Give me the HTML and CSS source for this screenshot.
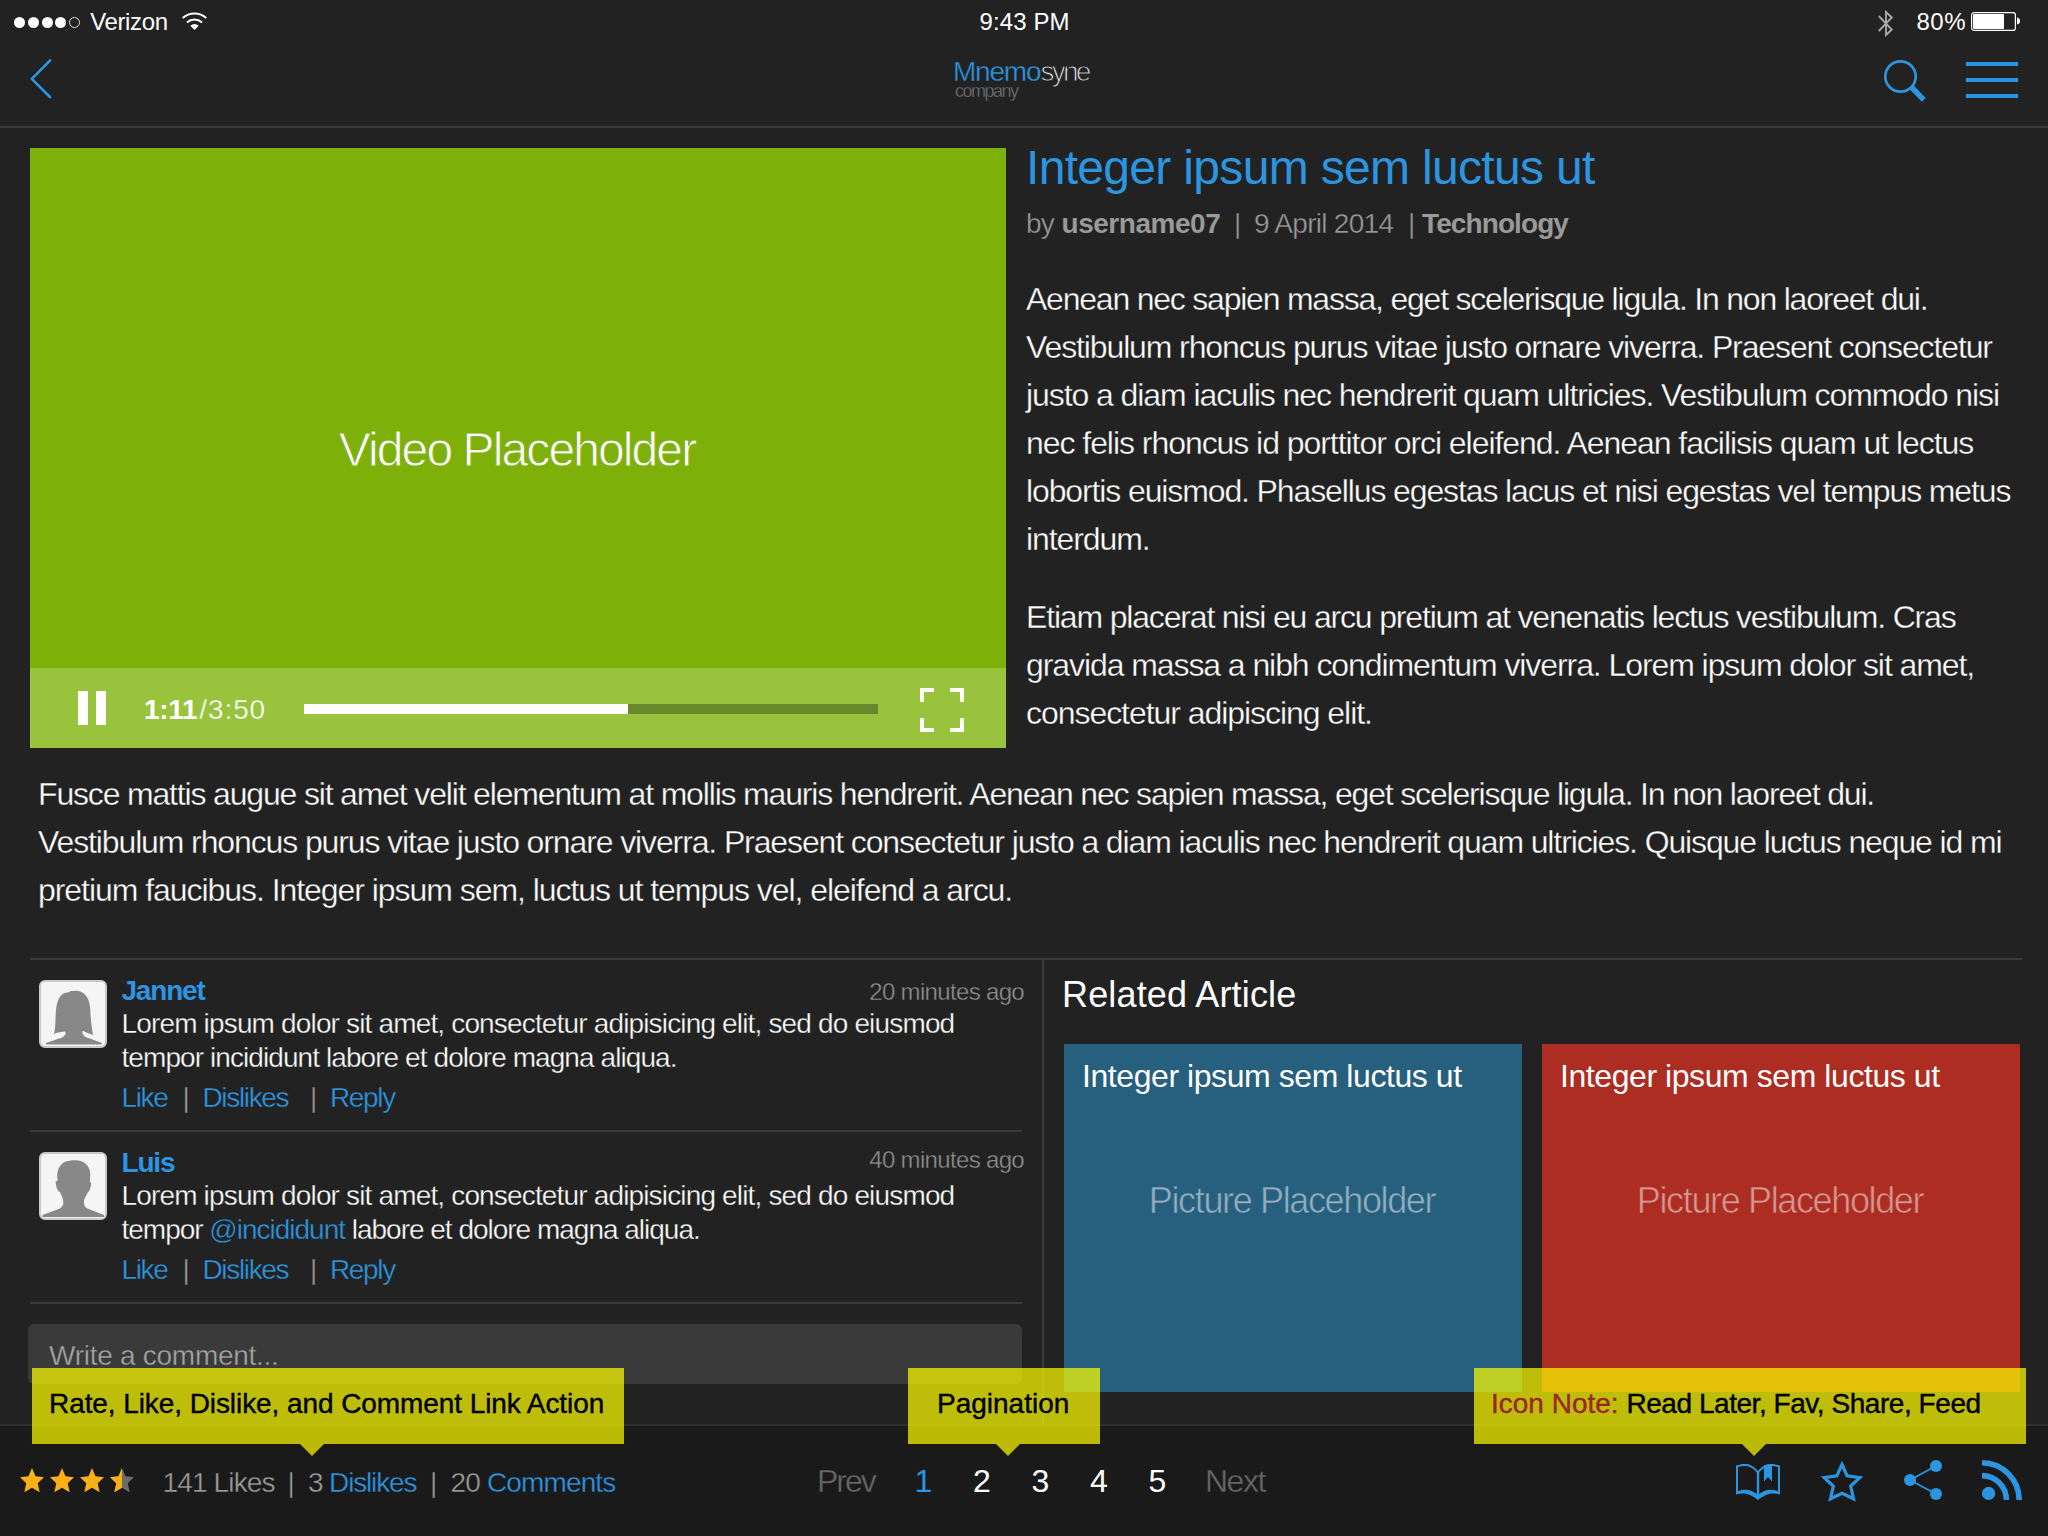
FILE: index.html
```
<!DOCTYPE html>
<html lang="en">
<head>
<meta charset="utf-8">
<title>Mnemosyne</title>
<link rel="stylesheet" href="styles.css">
</head>
<body>
<div class="status">
  <div class="status-left">
    <span class="signal"><i></i><i></i><i></i><i></i><i class="empty"></i></span>
    <span class="carrier">Verizon</span>
    <svg class="wifi" width="25" height="18" viewBox="0 0 25 18"><g fill="none" stroke="#fff" stroke-width="2"><path d="M.7 6A17.5 17.5 0 0 1 24.3 6"/><path d="M4.900 10.400A11.500 11.500 0 0 1 20.100 10.400"/></g><path d="M8.300 13.700Q12.500 10.300 16.700 13.700L12.500 18Z" fill="#fff"/></svg>
  </div>
  <div class="clock">9:43 PM</div>
  <div class="status-right">
    <svg class="bluetooth" width="15" height="27" viewBox="0 0 15 27"><path d="M.8 6L13.800 19.500L8 25V2L13.800 7.500L.8 21" fill="none" stroke="#a8a8a8" stroke-width="1.900"/></svg>
    <span class="charge">80%</span>
    <svg width="49" height="19" viewBox="0 0 49 19"><rect x=".6" y=".6" width="43.800" height="17.800" rx="2.500" fill="none" stroke="#fff" stroke-width="1.200"/><rect x="2" y="2" width="31" height="15" rx="1" fill="#fff"/><path d="M46 5.500Q49 6 49 9T46 12.500Z" fill="#fff"/></svg>
  </div>
</div>

<header class="nav">
  <svg class="back" width="22" height="40" viewBox="0 0 22 40"><path d="M20 1.500L1.800 19.800L20 38" fill="none" stroke="#2c95e0" stroke-width="2.600" stroke-linecap="round" stroke-linejoin="round"/></svg>
  <div class="logo">
    <div class="logo-name"><span class="logo-blue">Mnemo</span><span class="logo-thin">syne</span></div>
    <div class="logo-sub">company</div>
  </div>
  <div class="nav-tools">
    <svg width="42" height="42" viewBox="0 0 42 42" fill="none" stroke="#2c95e0"><circle cx="16.500" cy="16.500" r="15.200" stroke-width="2.700"/><path d="M27.300 27L39.800 39.800" stroke-width="5.500"/></svg>
    <div class="menu"><i></i><i></i><i></i></div>
  </div>
</header>

<main class="page">
  <article>
    <div class="lead">
      <div class="video">
        <div class="video-label">Video Placeholder</div>
        <div class="controls">
          <div class="pause"><i></i><i></i></div>
          <div class="time"><b>1:11</b><span>/3:50</span></div>
          <div class="track"><div class="played"></div></div>
          <svg class="full" width="44" height="44" viewBox="0 0 44 44"><path d="M2 14V2H14M30 2H42V14M42 30V42H30M14 42H2V30" fill="none" stroke="#fff" stroke-width="4"/></svg>
        </div>
      </div>
      <div class="intro">
        <h1>Integer ipsum sem luctus ut</h1>
        <div class="meta"><span>by</span><b class="user">username07</b><span>|</span><span>9 April 2014</span><span>|</span><b>Technology</b></div>
        <p class="copy">
          <span class="line tight">Aenean nec sapien massa, eget scelerisque ligula. In non laoreet dui.</span>
          <span class="line">Vestibulum rhoncus purus vitae justo ornare viverra. Praesent consectetur</span>
          <span class="line open">justo a diam iaculis nec hendrerit quam ultricies. Vestibulum commodo nisi</span>
          <span class="line loose">nec felis rhoncus id porttitor orci eleifend. Aenean facilisis quam ut lectus</span>
          <span class="line">lobortis euismod. Phasellus egestas lacus et nisi egestas vel tempus metus</span>
          <span class="line open">interdum.</span>
        </p>
        <p class="copy">
          <span class="line snug">Etiam placerat nisi eu arcu pretium at venenatis lectus vestibulum. Cras</span>
          <span class="line open">gravida massa a nibh condimentum viverra. Lorem ipsum dolor sit amet,</span>
          <span class="line loose">consectetur adipiscing elit.</span>
        </p>
      </div>
    </div>
    <p class="copy wide">
      <span class="line snug">Fusce mattis augue sit amet velit elementum at mollis mauris hendrerit. Aenean nec sapien massa, eget scelerisque ligula. In non laoreet dui.</span>
      <span class="line">Vestibulum rhoncus purus vitae justo ornare viverra. Praesent consectetur justo a diam iaculis nec hendrerit quam ultricies. Quisque luctus neque id mi</span>
      <span class="line loose">pretium faucibus. Integer ipsum sem, luctus ut tempus vel, eleifend a arcu.</span>
    </p>
  </article>

  <div class="lower">
    <section class="comments">
      <div class="comment">
        <svg class="avatar" width="68" height="68" viewBox="0 0 68 68"><rect x="1" y="1" width="66" height="66" rx="5" fill="#f5f5f5" stroke="#ccc8c8" stroke-width="2"/><path d="M35.500 11C41 10 51 14 51.300 30C51.500 40 53 48 54 55C49 53 46 52 44.300 51C42.500 51 43 57 50.300 58.300L62.700 63V64.500H7V63L20 58.500C25 58 27.500 54 26.300 51.500C23 52 19 52 15 54C17 46 16 40 17 30C18 17 24 12 29 12.500C31 10.800 33 11 35.500 11Z" fill="#888"/></svg>
        <div class="comment-body">
          <div class="comment-head"><b>Jannet</b><span class="when">20 minutes ago</span></div>
          <p class="said"><span class="said-line">Lorem ipsum dolor sit amet, consectetur adipisicing elit, sed do eiusmod</span><span class="said-line second">tempor incididunt labore et dolore magna aliqua.</span></p>
          <div class="actions"><a>Like</a><span>|</span><a>Dislikes</a><span>|</span><a>Reply</a></div>
        </div>
      </div>
      <div class="comment">
        <svg class="avatar" width="68" height="68" viewBox="0 0 68 68"><rect x="1" y="1" width="66" height="66" rx="5" fill="#f5f5f5" stroke="#ccc8c8" stroke-width="2"/><path d="M35.500 8.300C44 7.500 51.500 14 51.300 22C51 25 51.200 28 50.800 30C53 30 52 34 51 37C50 40 49 40 48.300 41C47 45 45 46 45 50C45 55 47 56 50.300 57.300L65 63V65H3.500V63L19 57.300C22 56 24.500 54 24.300 50C24 45 22 43 21.300 40.500C18 39 17 34 16.600 29.500L18.800 28.500C18 25 18 22 18.800 19C21 11 27 8.500 31.500 8.800C33 8 34 8.300 35.500 8.300Z" fill="#888"/></svg>
        <div class="comment-body">
          <div class="comment-head"><b>Luis</b><span class="when raised">40 minutes ago</span></div>
          <p class="said"><span class="said-line">Lorem ipsum dolor sit amet, consectetur adipisicing elit, sed do eiusmod</span><span class="said-line mention">tempor <a>@incididunt</a> labore et dolore magna aliqua.</span></p>
          <div class="actions"><a>Like</a><span>|</span><a>Dislikes</a><span>|</span><a>Reply</a></div>
        </div>
      </div>
      <div class="write">Write a comment...</div>
    </section>
    <section class="related">
      <h2>Related Article</h2>
      <div class="cards">
        <div class="card blue"><h3>Integer ipsum sem luctus ut</h3><div class="picture">Picture Placeholder</div></div>
        <div class="card red"><h3>Integer ipsum sem luctus ut</h3><div class="picture">Picture Placeholder</div></div>
      </div>
    </section>
  </div>
</main>

<footer class="bar">
  <div class="rating">
    <svg class="stars" width="114" height="25" viewBox="0 0 114 25">
      <defs><path id="star" d="M12 0L15.500 8.300L24 9.300L17.700 15.200L19.700 24.300L12 19.700L4.300 24.300L6.300 15.200L0 9.300L8.500 8.300Z"/><clipPath id="half"><rect width="12" height="25"/></clipPath></defs>
      <g fill="#fbb116"><use href="#star"/><use href="#star" x="30"/><use href="#star" x="60"/></g>
      <g transform="translate(90)"><use href="#star" fill="#6b6b6b"/><use href="#star" fill="#fbb116" clip-path="url(#half)"/></g>
    </svg>
    <div class="counts"><span>141 Likes</span><span>|</span><span>3 <a>Dislikes</a></span><span>|</span><span>20 <a>Comments</a></span></div>
  </div>
  <nav class="pages"><span class="step">Prev</span><span class="current">1</span><span>2</span><span>3</span><span>4</span><span>5</span><span class="step">Next</span></nav>
  <div class="share">
    <svg width="46" height="44" viewBox="0 0 46 44" fill="#2c95e0"><path fill-rule="evenodd" d="M1 5.500C9 3 16 2.500 23 11C30 2.500 37 3 45 5.500V34.500C35 32 30 35 23 40C16 35 11 32 1 34.500ZM3 7C10 5 16 5.500 21.800 12.500V34C16 29.500 10 28.500 3 31.200ZM43 7C36 5 30 5.500 24.200 12.500V34C30 29.500 36 28.500 43 31.200Z"/><path d="M29 5L37 4.500V21.500L33 17L29 21.500Z"/></svg>
    <svg width="44" height="44" viewBox="0 0 44 44" fill="none" stroke="#2c95e0" stroke-width="3.200"><path d="M22 4.500L27.100 15.900L39.800 17.700L30.700 26L33.500 38.800L22 33.300L10.500 38.800L13.300 26L4.200 17.700L16.900 15.900Z"/></svg>
    <svg width="38" height="44" viewBox="0 0 38 44" fill="#2c95e0"><path d="M32 6L6 20L32 34" fill="none" stroke="#2c95e0" stroke-width="1.800"/><circle cx="6" cy="20" r="6"/><circle cx="32" cy="6" r="6"/><circle cx="32" cy="34" r="6"/></svg>
    <svg width="40" height="44" viewBox="0 0 40 44"><circle cx="6.600" cy="33.400" r="6.600" fill="#2c95e0"/><path d="M0 15.600A24.400 24.400 0 0 1 24.400 40M0 2.800A37.200 37.200 0 0 1 37.200 40" fill="none" stroke="#2c95e0" stroke-width="5.600"/></svg>
  </div>
</footer>

<div class="tip tip-rate">Rate, Like, Dislike, and Comment Link Action</div>
<div class="tip tip-pages">Pagination</div>
<div class="tip tip-icons"><span class="note">Icon Note:</span> <span class="list">Read Later, Fav, Share, Feed</span></div>
</body>
</html>
```
FILE: styles.css
```
* { box-sizing: border-box; }

:root {
  --bg: #222;
  --blue: #2c95e0;
  --rule: #393939;
}

body {
  margin: 0;
  width: 2048px;
  height: 1536px;
  overflow: hidden;
  position: relative;
  display: flex;
  flex-direction: column;
  background: var(--bg);
  color: #fff;
  font-family: "Liberation Sans", Arial, sans-serif;
  font-size: 28px;
  line-height: 34px;
  white-space: nowrap;
}

h1, h2, h3, p { margin: 0; font-weight: 400; }
a { color: var(--blue); }
svg { display: block; flex: none; }

/* A hairline stroke in the backdrop colour trims the regular face to a light weight. */
.copy, .said, .actions, .meta span, .when, .write, .counts, .step,
.logo-name, .logo-sub, .time span {
  -webkit-text-stroke: 0.35px var(--bg);
}

/* status bar */
.status { display: flex; height: 44px; flex: none; font-size: 24px; line-height: 44px; }
.status-left, .status-right { flex: 1; display: flex; align-items: center; }
.status-left { flex: none; width: 979.5px; padding-left: 14px; }
.status-right { padding-right: 28px; justify-content: flex-end; }
.signal { display: flex; gap: 2.8px; margin-right: 10px; }
.signal i { width: 11px; height: 11px; border-radius: 50%; background: #fff; }
.signal .empty { background: none; border: 1px solid #ddd; }
.carrier { letter-spacing: -0.37px; }
.wifi { margin: -2px 0 0 14px; }
.clock { letter-spacing: 0.1px; }
.bluetooth { margin: 3px 23px 0 0; }
.charge { letter-spacing: 0.5px; margin-right: 5px; }
.status-right svg:last-child { margin-top: -1px; }

/* navigation */
.nav {
  display: flex;
  height: 84px;
  flex: none;
  padding: 14px 30px 0;
  border-bottom: 2px solid var(--rule);
}
.back { margin: 1px 0 0; }
.logo { margin-left: 901px; padding-top: 1px; }
.logo-name { line-height: 26px; }
.logo-blue { color: var(--blue); letter-spacing: -1.2px; }
.logo-thin { color: #ddd; letter-spacing: -2.7px; -webkit-text-stroke-width: 0.9px; }
.logo-sub { font-size: 18px; line-height: 12px; letter-spacing: -1.5px; color: #777; padding-left: 2px; }
.nav-tools { display: flex; gap: 40px; padding-top: 2px; margin-left: auto; }
.menu { display: flex; flex-direction: column; gap: 12px; padding-top: 2px; }
.menu i { width: 52px; height: 4px; background: var(--blue); }

/* article */
.page { height: 1296px; flex: none; padding: 20px 26px 0 30px; }
.lead { display: flex; height: 600px; }
.video {
  width: 976px;
  height: 600px;
  flex: none;
  display: flex;
  flex-direction: column;
  background: #7eb00a;
}
.video-label {
  flex: 1;
  display: flex;
  align-items: center;
  justify-content: center;
  padding: 84px 2px 0 0;
  font-size: 48px;
  letter-spacing: -1.9px;
  -webkit-text-stroke: 0.9px #7eb00a;
}
.controls { height: 80px; display: flex; align-items: center; background: #99c33c; }
.pause { display: flex; gap: 8px; margin-left: 48px; width: 66px; }
.pause i { width: 10px; height: 34px; background: #fff; }
.time { width: 160px; color: #fff; line-height: 34px; padding-top: 4px; }
.time b { letter-spacing: -0.3px; margin-right: 2px; }
.time span { letter-spacing: 0.9px; -webkit-text-stroke-color: #99c33c; }
.track { width: 574px; height: 10px; background: #69882b; margin-top: 2px; }
.played { width: 324px; height: 10px; background: #fff; }
.full { margin-left: 42px; margin-top: 4px; }

.intro { margin: -4px 0 0 20px; }
h1 { font-size: 48px; line-height: 48px; letter-spacing: -0.68px; color: var(--blue); }
.meta {
  display: grid;
  grid-template-columns: 35.5px 172.5px 20px 154px 14px auto;
  margin: 15px 0 34px;
  color: #999;
  letter-spacing: -0.72px;
}
.meta b { letter-spacing: -0.9px; }
.meta .user { letter-spacing: -0.46px; }

.copy { font-size: 32px; line-height: 48px; letter-spacing: -1.12px; }
.copy + .copy { margin-top: 30px; }
.line { display: block; }
.open { letter-spacing: -1.08px; }
.snug { letter-spacing: -1.17px; }
.tight { letter-spacing: -1.22px; }
.loose { letter-spacing: -1.05px; }
.wide { padding: 22px 0 0 8px; }

/* comments and related articles */
.lower {
  display: flex;
  width: 1992px;
  height: 465px;
  margin-top: 44px;
  border-top: 2px solid var(--rule);
}
.comments { width: 1012px; flex: none; padding-right: 20px; }
.comment {
  display: flex;
  height: 172px;
  padding: 14px 0 0 9px;
  border-bottom: 2px solid var(--rule);
}
.avatar { margin: 6px 14.5px 0 0; }
.comment-body { flex: 1; }
.comment-head { display: flex; justify-content: space-between; height: 33px; }
.comment-head b { color: var(--blue); letter-spacing: -1.2px; }
.when { margin: 1px -2px 0 0; color: #8f8f8f; font-size: 24px; letter-spacing: -0.67px; }
.raised { margin-top: -3px; }
.said { line-height: 33.6px; letter-spacing: -0.84px; }
.said-line { display: block; }
.second { letter-spacing: -0.92px; }
.mention { letter-spacing: -1.01px; }
.actions {
  display: grid;
  grid-template-columns: 61px 20px 107.5px 20px auto;
  margin-top: 7px;
  letter-spacing: -1.35px;
  color: #999;
}
.write {
  height: 60px;
  margin: 20px 0 0 -2px;
  padding-left: 21px;
  border-radius: 6px;
  background: #3a3a3a;
  color: #a5a5a5;
  line-height: 64px;
  letter-spacing: -0.27px;
  -webkit-text-stroke-color: #3a3a3a;
}

.related { flex: 1; padding: 14.5px 0 0 20px; border-left: 2px solid var(--rule); }
h2 { font-size: 36px; line-height: 40px; margin: 0 0 29.5px -2px; letter-spacing: 0.15px; }
.cards { display: flex; gap: 20px; }
.card { height: 348px; padding-top: 12px; }
.blue { width: 458px; background: #27607f; }
.red { width: 478px; background: #ad2d23; }
h3 { padding-left: 18px; font-size: 32px; line-height: 40px; letter-spacing: -0.43px; }
.picture {
  margin: 85px 2px 0 0;
  font-size: 36px;
  line-height: 40px;
  letter-spacing: -1.36px;
  text-align: center;
}
.blue .picture { color: #93afbf; -webkit-text-stroke: 0.6px #27607f; }
.red .picture { color: #d69691; -webkit-text-stroke: 0.6px #ad2d23; }

/* footer */
.bar {
  --bg: #1a1a1a;
  flex: 1;
  display: flex;
  padding: 34px 26px 0 20px;
  border-top: 2px solid #303030;
  background: #1a1a1a;
}
.counts, .step { -webkit-text-stroke-color: #1a1a1a; }
.rating { display: flex; width: 797px; flex: none; }
.stars { margin: 8px 28.5px 0 0; }
.counts {
  display: grid;
  grid-template-columns: 125px 20.5px 122px 20.5px auto;
  margin-top: 3px;
  color: #999;
  letter-spacing: -0.85px;
}
.counts span { line-height: 40px; }
.counts span:nth-child(3) { letter-spacing: -1.15px; }
.pages {
  display: grid;
  grid-template-columns: 97.5px 58.5px 58.5px 58.5px 58.5px 56.5px auto;
  font-size: 32px;
  line-height: 40px;
  padding-top: 1px;
}
.current { color: var(--blue); }
.step { color: #666; letter-spacing: -2px; }
.step:last-child { letter-spacing: -1.5px; }
.share { display: flex; gap: 40px; margin-left: auto; }
.share svg:first-child { margin-right: -1px; }

/* callouts */
.tip {
  position: absolute;
  top: 1368px;
  height: 76px;
  line-height: 72px;
  color: #000;
  -webkit-text-stroke: 0.4px currentColor;
  background: rgba(255, 255, 0, 0.7);
}
.tip::after {
  content: "";
  position: absolute;
  top: 76px;
  width: 24px;
  height: 12px;
  background: rgba(255, 255, 0, 0.7);
  clip-path: polygon(0 0, 100% 0, 50% 100%);
}
.tip-rate { left: 32px; width: 592px; padding-left: 17px; letter-spacing: -0.08px; }
.tip-rate::after { left: 268px; }
.tip-pages { left: 908px; width: 192px; padding-left: 29px; }
.tip-pages::after { left: 88px; }
.tip-icons { left: 1474px; width: 552px; padding-left: 17px; }
.tip-icons::after { left: 268px; }
.note { color: #9c2623; }
.list { letter-spacing: -0.45px; }
```
